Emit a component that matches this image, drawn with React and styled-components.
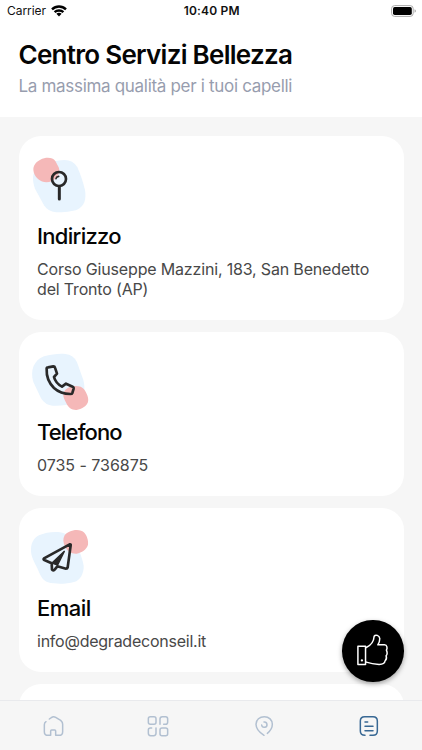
import React from "react";
import styled, { createGlobalStyle } from "styled-components";

const GlobalStyle = createGlobalStyle`
  * {
    box-sizing: border-box;
  }
  body {
    margin: 0;
    font-family: Inter, "Liberation Sans", sans-serif;
    background: #f6f6f6;
  }
`;
const Screen = styled.div`
  position: relative;
  display: flex;
  flex-direction: column;
  width: 422px;
  height: 750px;
  overflow: hidden;
  background: #f6f6f6;
`;
const StatusBar = styled.div`
  display: grid;
  grid-template-columns: 1fr auto 1fr;
  align-items: center;
  height: 22px;
  padding: 0 5.5px 0 7px;
  font-size: 12px;
  line-height: 22px;
  color: #111;
`;
const Carrier = styled.div`
  display: flex;
  align-items: center;
  gap: 5px;
  letter-spacing: -0.05px;
`;
const Time = styled.div`
  font-weight: 600;
  letter-spacing: 0.2px;
`;
const BatteryIcon = styled.svg`
  justify-self: end;
`;
const Header = styled.header`
  flex: none;
  height: 117px;
  background: #fff;
`;
const H1 = styled.h1`
  margin: 17px 0 0 18.5px;
  font-size: 26px;
  font-weight: 600;
  line-height: 32px;
  letter-spacing: -0.72px;
  white-space: nowrap;
  color: #050505;
`;
const Subtitle = styled.p`
  margin: 4px 0 0 18.5px;
  font-size: 17px;
  line-height: 22px;
  letter-spacing: -0.31px;
  white-space: nowrap;
  color: #979dae;
`;
const Cards = styled.main`
  flex: 1;
  display: flex;
  flex-direction: column;
  gap: 12px;
  min-height: 0;
  padding: 19px 18.5px 0 18.5px;
  overflow: hidden;
`;
const CardBox = styled.section`
  flex: none;
  min-height: 164px;
  padding: 16px 18.5px 21px;
  border-radius: 22px;
  background: #fff;
`;
const Art = styled.svg`
  display: block;
  margin-left: -10px;
`;
const H2 = styled.h2`
  margin: 5px 0 0;
  font-size: 22px;
  font-weight: 500;
  line-height: 30px;
  letter-spacing: ${(props) => props.$spacing}px;
  color: #050505;
`;
const Detail = styled.p`
  margin: 8px 0 0;
  font-size: 16px;
  line-height: 20px;
  letter-spacing: ${(props) => props.$spacing}px;
  white-space: pre-line;
  color: #484848;
`;
const TabBar = styled.nav`
  flex: none;
  display: flex;
  height: 50px;
  border-top: 1px solid #e9eaed;
  background: #f6f6f6;
`;
const Tab = styled.a`
  flex: 1;
  display: flex;
  align-items: center;
  justify-content: center;
  color: ${(props) => (props.$active ? "#386894" : "#b2c0d1")};
`;
const TabIcon = styled.svg`
  fill: none;
  stroke: currentColor;
  stroke-width: 4.5;
  stroke-linecap: round;
  stroke-linejoin: round;
`;
const LikeButton = styled.button`
  position: absolute;
  right: 18.5px;
  bottom: 68.5px;
  width: 61.5px;
  height: 61.5px;
  padding: 0;
  border: 0;
  border-radius: 50%;
  background: #000;
  box-shadow: 0 2px 5px rgba(0, 0, 0, 0.35);
`;

const BLUE = "#e8f4fe";
const PINK = "#f5b8b8";
const INK = "#292929";

const Wifi = () => (
  <svg width="16" height="12" viewBox="0 0 16 12" fill="none" stroke="#000" strokeWidth="2.4">
    <path d="M1 4.4 C5 .6 11 .6 15 4.4" />
    <path d="M3.6 7.2 C6 4.9 10 4.9 12.4 7.2" />
    <path d="M8 11.4 L5.4 8.8 C6.8 7.5 9.2 7.5 10.6 8.8 Z" fill="#000" stroke="none" />
  </svg>
);

const Battery = () => (
  <BatteryIcon width="26" height="12" viewBox="0 0 26 12">
    <rect x=".6" y=".6" width="21.6" height="10.8" rx="3" fill="none" stroke="#aaa" />
    <rect x="2" y="2" width="18.8" height="8" rx="1.7" />
    <path d="M23.6 4.2 C25.2 4.8 25.2 7.2 23.6 7.8 Z" fill="#999" />
  </BatteryIcon>
);

const PinArt = () => (
  <Art width="66" height="64" viewBox="36 66 198 192">
    <path
      fill={BLUE}
      d="M98 97 L138 91 Q172 86 187 112 Q200 140 210 180 Q217 222 189 238 C172 246 145 247 123 247 Q99 245 87 226 L60 176 C49 145 49 111 98 97Z"
    />
    <path
      fill={PINK}
      d="M76 89 C94 80 113 82 121 93 L131 112 C138 129 125 146 111 153 C96 160 81 157 70 148 C57 137 52 119 57 108 C61 99 67 93 76 89Z"
    />
    <g fill="none" stroke={INK} strokeWidth="8" strokeLinecap="round">
      <circle cx="132" cy="147" r="21" />
      <path d="M133 171 V207" strokeWidth="9" />
      <path d="M123 146 Q124 140 131 139" strokeWidth="5" />
    </g>
  </Art>
);

const PhoneArt = () => (
  <Art width="66" height="64" viewBox="36 54 198 192">
    <path
      fill={BLUE}
      d="M87 79 C110 72 136 70 151 72 Q176 74 186 97 L205 150 C213 181 207 205 182 217 C160 226 135 228 113 227 Q91 226 78 205 L55 156 C45 122 56 91 87 79Z"
    />
    <path
      fill={PINK}
      d="M164 171 C180 165 201 168 207 178 C216 190 222 206 219 216 C215 229 199 237 185 240 C171 241 160 233 154 220 C148 208 144 201 145 192 C148 181 154 175 164 171Z"
    />
    <path
      fill="none"
      stroke={INK}
      strokeWidth="8"
      strokeLinejoin="round"
      d="M95 117 Q94 112 99 112 L115 109 Q119 109 120 113 L126 131 L117 141 C120 153 130 164 141 170 L153 161 L173 170 Q177 172 176 176 L172 189 Q171 192 166 192 C148 192 130 186 117 174 C101 158 94 136 95 117Z"
    />
  </Art>
);

const PlaneArt = () => (
  <Art width="66" height="64" viewBox="36 57 198 192">
    <path
      fill={BLUE}
      d="M72 91 C90 82 119 79 135 82 C155 87 164 90 176 105 C188 124 202 156 206 182 C207 203 197 226 177 231 C154 238 119 238 99 232 C82 227 76 211 67 190 C57 169 47 154 48 132 C49 113 57 99 72 91Z"
    />
    <path
      fill={PINK}
      d="M163 80 C179 72 199 73 208 83 C216 92 221 107 219 119 C215 133 200 143 185 146 C169 147 158 140 151 126 C144 114 143 101 149 91 C152 86 157 83 163 80Z"
    />
    <g fill="none" stroke={INK} strokeWidth="8" strokeLinejoin="round" strokeLinecap="round">
      <path d="M164 118 L87 160 Q84 163 88 165 L110 175 L111 194 Q114 199 119 194 L127 184 L153 191 Q157 191 158 187 L167 121 Q168 117 164 118Z" />
      <path d="M148 139 L111 174 L128 180 Z" fill={INK} strokeWidth="4" />
    </g>
  </Art>
);

const Thumb = () => (
  <svg
    width="61"
    height="61"
    viewBox="61 60 184 184"
    fill="none"
    stroke="#fff"
    strokeWidth="4.5"
    strokeLinejoin="round"
    strokeLinecap="round"
  >
    <path d="M109 139 H132 V194 H109 Z" />
    <path d="M134 143 C149 136 157 125 158 109 C162 103 174 106 175 116 Q175 126 169 135 H189 C198 135 198 146 195 151 C198 158 197 165 194 168 C196 174 195 180 191 183 C190 192 182 194 173 194 C156 193 143 190 134 187" />
    <circle cx="121" cy="182" r="3.5" fill="#fff" stroke="none" />
  </svg>
);

const HomeIcon = () => (
  <TabIcon width="24" height="24" viewBox="122 159 72 72">
    <path d="M137 182 Q132 185 132 191 V212 Q132 223 143 223 H151 V210 Q151 207 154 207 H163 Q166 207 166 210 V223 H176 Q187 223 187 212 V190 Q187 183 181 178 L166 169 Q159 165 153 170 L147 174" />
  </TabIcon>
);

const GridIcon = () => (
  <TabIcon width="24" height="24" viewBox="439 159 72 72">
    <rect x="446" y="167" width="23" height="23" rx="6" />
    <rect x="481" y="201" width="23" height="23" rx="6" />
    <path d="M481 190 V174 Q481 167 488 167 H498 Q504 167 504 174 V183 Q504 190 498 190 H492" />
    <path d="M456 201 H452 Q446 201 446 207 V217 Q446 224 453 224 H462 Q469 224 469 217 V201" />
  </TabIcon>
);

const MapIcon = () => (
  <TabIcon width="24" height="24" viewBox="122 159 72 72">
    <path d="M158 223 C145 215 134 202 134 190 C134 176 145 167 159 167 C173 167 183 177 183 190 C183 201 177 210 168 217" />
    <path d="M158 183 A8 8 0 1 1 151 192" />
  </TabIcon>
);

const InfoIcon = () => (
  <TabIcon width="24" height="24" viewBox="439 159 72 72">
    <path d="M463 223 Q449 223 449 210 V180 Q449 167 462 167 H487 Q500 167 500 180 V210 Q500 223 487 223 H478" />
    <path d="M463 183 H471 M463 196 H487 M463 209 H487" />
  </TabIcon>
);

const CARDS = [
  {
    title: "Indirizzo",
    titleSpacing: -0.7,
    detail: "Corso Giuseppe Mazzini, 183, San Benedetto\ndel Tronto (AP)",
    spacing: -0.17,
    Icon: PinArt,
  },
  {
    title: "Telefono",
    titleSpacing: -0.85,
    detail: "0735 - 736875",
    spacing: -0.03,
    Icon: PhoneArt,
  },
  {
    title: "Email",
    titleSpacing: -0.55,
    detail: "info@degradeconseil.it",
    spacing: -0.24,
    Icon: PlaneArt,
  },
];

const TABS = [HomeIcon, GridIcon, MapIcon, InfoIcon];

const Card = ({ title, titleSpacing, detail, spacing, Icon }) => (
  <CardBox>
    <Icon />
    <H2 $spacing={titleSpacing}>{title}</H2>
    <Detail $spacing={spacing}>{detail}</Detail>
  </CardBox>
);

const App = () => {
  return (
    <>
      <GlobalStyle />
      <Screen>
        <Header>
          <StatusBar>
            <Carrier>
              Carrier
              <Wifi />
            </Carrier>
            <Time>10:40 PM</Time>
            <Battery />
          </StatusBar>
          <H1>Centro Servizi Bellezza</H1>
          <Subtitle>La massima qualità per i tuoi capelli</Subtitle>
        </Header>
        <Cards>
          {CARDS.map((card) => (
            <Card key={card.title} {...card} />
          ))}
          <CardBox />
        </Cards>
        <TabBar>
          {TABS.map((Icon, index) => (
            <Tab key={index} $active={index === 3}>
              <Icon />
            </Tab>
          ))}
        </TabBar>
        <LikeButton>
          <Thumb />
        </LikeButton>
      </Screen>
    </>
  );
};

export default App;
